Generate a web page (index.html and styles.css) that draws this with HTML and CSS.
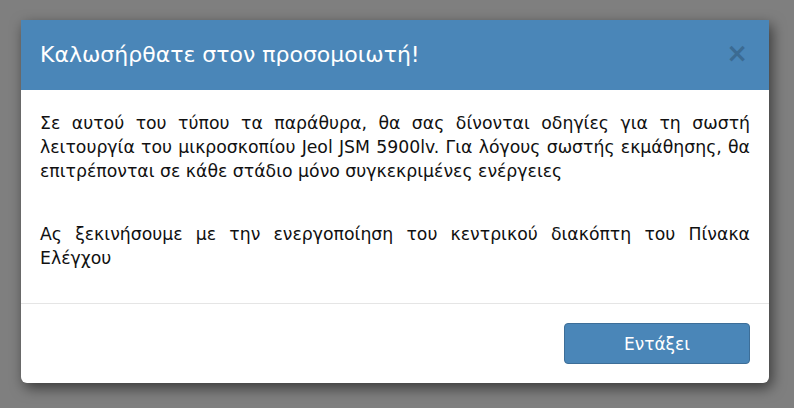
FILE: index.html
```html
<!DOCTYPE html>
<html lang="el">
<head>
<meta charset="utf-8">
<title>Προσομοιωτής</title>
<link rel="stylesheet" href="styles.css">
</head>
<body>
<div class="backdrop">
  <div class="modal">
    <div class="modal-header">
      <h4 class="modal-title">Καλωσήρθατε στον προσομοιωτή!</h4>
      <button class="close" type="button" aria-label="Close">×</button>
    </div>
    <div class="modal-body">
      <p>Σε αυτού του τύπου τα παράθυρα, θα σας δίνονται οδηγίες για τη σωστή λειτουργία του μικροσκοπίου Jeol JSM 5900lv. Για λόγους σωστής εκμάθησης, θα επιτρέπονται σε κάθε στάδιο μόνο συγκεκριμένες ενέργειες</p>
      <p>Ας ξεκινήσουμε με την ενεργοποίηση του κεντρικού διακόπτη του Πίνακα Ελέγχου</p>
    </div>
    <div class="modal-footer">
      <button class="btn-ok" type="button">Εντάξει</button>
    </div>
  </div>
</div>
</body>
</html>
```
FILE: styles.css
```css
html, body {
  margin: 0;
  padding: 0;
  height: 100%;
}
body {
  background: #7f7f7f;
  font-family: "DejaVu Sans", Verdana, sans-serif;
  color: #111;
}
.backdrop {
  padding: 20px 25px 0 21px;
}
.modal {
  width: 748px;
  background: #fff;
  border-radius: 0 0 6px 6px;
  box-shadow: 3px 5px 14px rgba(0, 0, 0, 0.55);
  overflow: hidden;
}
.modal-header {
  background: #4a86b8;
  height: 70px;
  padding: 0 20px 0 19px;
  display: flex;
  align-items: center;
  justify-content: space-between;
  box-sizing: border-box;
}
.modal-title {
  margin: 0;
  font-size: 22px;
  font-weight: normal;
  color: #fff;
  line-height: 30px;
}
.close {
  background: none;
  border: none;
  padding: 0;
  margin: -5px 1px 0 0;
  font-family: "DejaVu Sans", sans-serif;
  font-size: 26px;
  font-weight: bold;
  line-height: 1;
  color: #3b6b93;
  cursor: pointer;
}
.modal-body {
  padding: 21px 19px 33px 19px;
  font-size: 17.3px;
  line-height: 24px;
  text-align: justify;
}
.modal-body p {
  margin: 0 0 39px 0;
}
.modal-body p:last-child {
  margin-bottom: 0;
}
.modal-footer {
  border-top: 1px solid #e5e5e5;
  padding: 19px 19px 19px;
  display: flex;
  justify-content: flex-end;
}
.btn-ok {
  width: 186px;
  height: 41px;
  background: #4a86b8;
  border: 1px solid #3d6e98;
  border-radius: 4px;
  color: #fff;
  font-family: "DejaVu Sans", Verdana, sans-serif;
  font-size: 17px;
  cursor: pointer;
}
```
